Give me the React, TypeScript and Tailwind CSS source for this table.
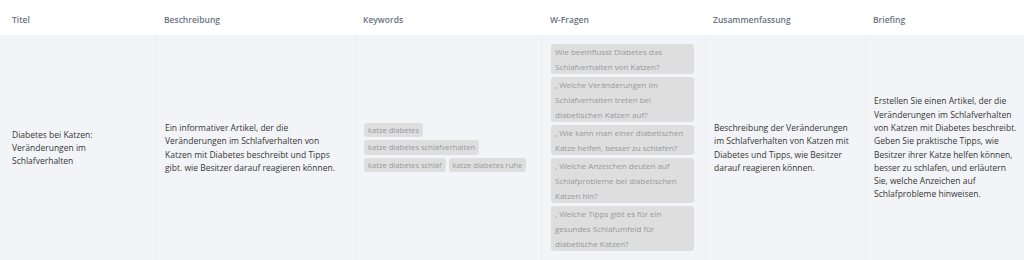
import React from "react";

const font = { fontFamily: '"Open Sans", "Noto Sans", sans-serif' };

const keywords = [
  "katze diabetes",
  "katze diabetes schlafverhalten",
  "katze diabetes schlaf",
  "katze diabetes ruhe",
];

const questions = [
  "Wie beeinflusst Diabetes das Schlafverhalten von Katzen?",
  ", Welche Veränderungen im Schlafverhalten treten bei diabetischen Katzen auf?",
  ", Wie kann man einer diabetischen Katze helfen, besser zu schlafen?",
  ", Welche Anzeichen deuten auf Schlafprobleme bei diabetischen Katzen hin?",
  ", Welche Tipps gibt es für ein gesundes Schlafumfeld für diabetische Katzen?",
];

export default function App() {
  return (
    <div
      className="w-[1024px] h-[260px] overflow-hidden bg-white"
      style={font}
    >
      <div className="w-[1028px]">
        {/* header */}
        <div className="flex h-[35px] bg-white text-[8.5px] font-semibold text-[#6b7280]">
          <div className="w-[156px] pl-[12px] pt-[5px] flex items-center">Titel</div>
          <div className="w-[199px] pl-[8px] pt-[5px] flex items-center">Beschreibung</div>
          <div className="w-[186px] pl-[8px] pt-[5px] flex items-center">Keywords</div>
          <div className="w-[164px] pl-[9px] pt-[5px] flex items-center">W-Fragen</div>
          <div className="w-[160px] pl-[8px] pt-[5px] flex items-center">Zusammenfassung</div>
          <div className="w-[163px] pl-[8px] pt-[5px] flex items-center">Briefing</div>
        </div>
        {/* body row */}
        <div className="flex bg-[#f3f4f7] text-[8.5px] leading-[13.3px] text-[#363636]">
          <div className="w-[156px] px-[12px] py-[9px] flex items-center">
            <p>Diabetes bei Katzen: Veränderungen im Schlafverhalten</p>
          </div>
          <div className="w-[199px] px-[8px] py-[9px] flex items-center border-l border-[#eceef2]">
            <p>
              Ein informativer Artikel, der die Veränderungen im Schlafverhalten
              von Katzen mit Diabetes beschreibt und Tipps gibt. wie Besitzer
              darauf reagieren können.
            </p>
          </div>
          <div className="w-[186px] pl-[8px] pr-[4px] py-[9px] flex items-center border-l border-[#eceef2]">
            <div className="flex w-full flex-wrap gap-[3px]">
              {keywords.map((k) => (
                <span
                  key={k}
                  className="rounded-[3px] bg-[#dedede] px-[4px] text-[7.6px] leading-[14.5px] text-[#999999] whitespace-nowrap"
                >
                  {k}
                </span>
              ))}
            </div>
          </div>
          <div className="w-[164px] pl-[9px] pr-[11px] py-[9px] flex items-center border-l border-[#eceef2]">
            <div className="flex w-full flex-col gap-[3px]">
              {questions.map((q) => (
                <div
                  key={q}
                  className="rounded-[3px] bg-[#dedede] px-[4px] text-[8px] leading-[15px] text-[#999999]"
                >
                  {q}
                </div>
              ))}
            </div>
          </div>
          <div className="w-[160px] px-[8px] py-[9px] flex items-center border-l border-[#eceef2]">
            <p>
              Beschreibung der Veränderungen im Schlafverhalten von Katzen mit
              Diabetes und Tipps, wie Besitzer darauf reagieren können.
            </p>
          </div>
          <div className="w-[163px] px-[8px] py-[9px] flex items-center border-l border-[#eceef2]">
            <p>
              Erstellen Sie einen Artikel, der die Veränderungen im
              Schlafverhalten von Katzen mit Diabetes beschreibt. Geben Sie
              praktische Tipps, wie Besitzer ihrer Katze helfen können, besser zu
              schlafen, und erläutern Sie, welche Anzeichen auf Schlafprobleme
              hinweisen.
            </p>
          </div>
        </div>
      </div>
    </div>
  );
}
